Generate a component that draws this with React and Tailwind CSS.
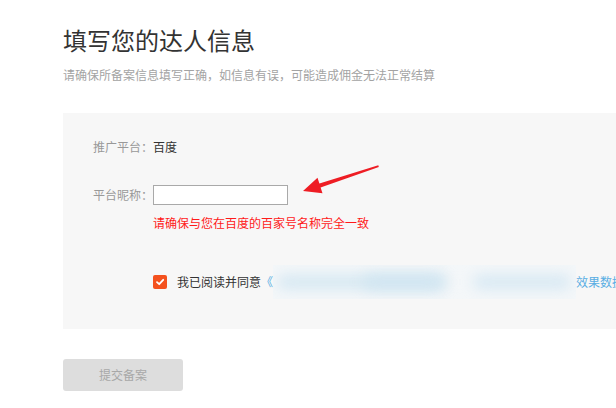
import React from "react";

export default function App() {
  const font = { fontFamily: '"Noto Sans CJK SC", "Noto Sans", sans-serif' };
  return (
    <div className="relative w-[616px] h-[408px] overflow-hidden bg-white" style={font}>
      <div className="flex flex-col pl-[63px]">
        <div className="mt-[24px] h-[32px] leading-[32px] text-[24px] text-[#333333] whitespace-nowrap">
          填写您的达人信息
        </div>
        <div className="mt-[9px] h-[20px] leading-[20px] text-[12px] text-[#a3a3a3] whitespace-nowrap">
          请确保所备案信息填写正确，如信息有误，可能造成佣金无法正常结算
        </div>
        <div className="mt-[28px] h-[216px] w-[600px] bg-[#f7f7f7] pl-[30px] flex flex-col">
          <div className="mt-[24px] h-[20px] flex items-center text-[12px] whitespace-nowrap">
            <span className="w-[60px] text-[#999999]">推广平台：</span>
            <span className="text-[#333333]">百度</span>
          </div>
          <div className="mt-[28px] h-[20px] flex items-center text-[12px] whitespace-nowrap">
            <span className="w-[60px] text-[#999999]">平台昵称：</span>
            <div className="w-[135px] h-[20px] bg-white border border-[#a9a9a9]"></div>
          </div>
          <div className="mt-[8px] h-[20px] pl-[60px] flex items-center text-[12px] text-[#ff1a1a] whitespace-nowrap">
            请确保与您在百度的百家号名称完全一致
          </div>
          <div className="mt-[32px] h-[34px] pl-[60px] flex items-center text-[12px] whitespace-nowrap">
            <div className="w-[14px] h-[14px] rounded-[2px] bg-[#f4511e] flex items-center justify-center shrink-0">
              <svg width="10" height="10" viewBox="0 0 10 10">
                <path d="M2 5.2 L4.2 7.2 L8.2 2.8" fill="none" stroke="white" strokeWidth="1.8" strokeLinecap="round" strokeLinejoin="round" />
              </svg>
            </div>
            <span className="ml-[10px] text-[#333333]">我已阅读并同意</span>
            <span className="text-[#5aaee3]">《</span>
            <div className="relative w-[303px] h-[34px] shrink-0 bg-[#f4f7f9] overflow-hidden">
              <div className="absolute left-[4px] top-[10px] w-[170px] h-[14px] rounded-full bg-[#d4e7f2] blur-[7px]"></div>
              <div className="absolute left-[90px] top-[10px] w-[80px] h-[14px] rounded-full bg-[#d0e5f1] blur-[7px]"></div>
              <div className="absolute left-[200px] top-[10px] w-[98px] h-[14px] rounded-full bg-[#d6e8f3] blur-[7px]"></div>
            </div>
            <span className="text-[#5aaee3]">效果数据</span>
          </div>
        </div>
        <div className="mt-[30px] w-[120px] h-[32px] rounded-[3px] bg-[#dddddd] text-[#a8a8a8] text-[12px] flex items-center justify-center">
          提交备案
        </div>
      </div>
      <svg className="absolute left-0 top-0" width="616" height="408" viewBox="0 0 616 408">
        <polygon
          points="303,191 317.5,177.7 319.4,183.4 378.3,165.3 378.8,166.9 320.6,187.4 322.5,193.2"
          fill="#ee1d24"
        />
      </svg>
    </div>
  );
}
